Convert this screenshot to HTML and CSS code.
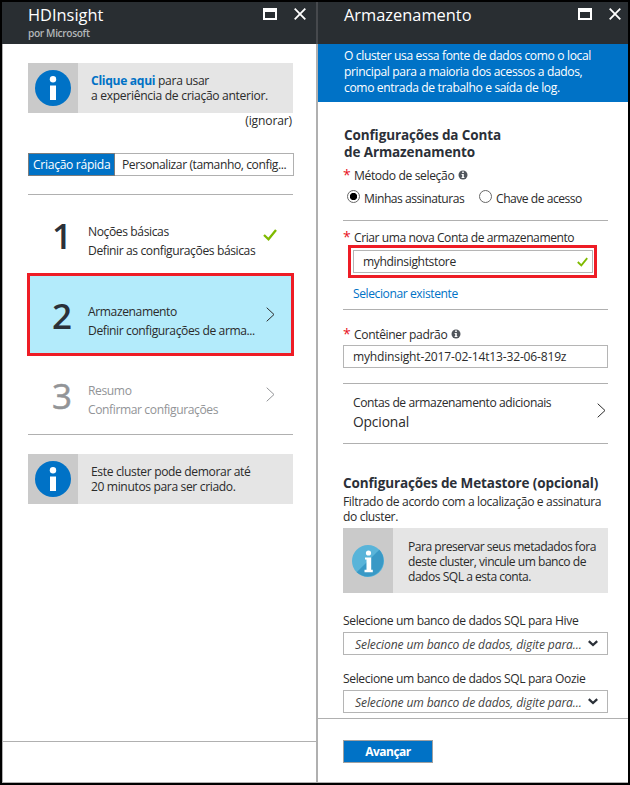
FILE: index.html
```html
<!DOCTYPE html>
<html lang="pt-BR">
<head>
<meta charset="utf-8">
<title>HDInsight</title>
<link rel="stylesheet" href="styles.css">
</head>
<body>
<svg class="defs" width="0" height="0">
  <symbol id="max" viewBox="0 0 14 12"><path fill="#fff" fill-rule="evenodd" d="M0 0h14v12H0zM2 4v6h10V4z"/></symbol>
  <symbol id="close" viewBox="0 0 12 12"><path d="M.7.7l10.6 10.6M11.3.7L.7 11.3" stroke="#fff" stroke-width="1.8" fill="none"/></symbol>
  <symbol id="check" viewBox="0 0 14 12"><path d="M1 6l4.5 4.3L13 1" stroke="#7fba00" stroke-width="2.3" fill="none"/></symbol>
  <symbol id="chevron" viewBox="0 0 9 15"><path d="M.7.7l7.3 6.8-7.3 6.8" stroke="currentColor" stroke-width="1" fill="none"/></symbol>
  <symbol id="caret" viewBox="0 0 10 7"><path d="M.8 1.2L5 5 9.200 1.200" stroke="#2b3038" stroke-width="2.300" fill="none"/></symbol>
  <symbol id="info" viewBox="0 0 36 36"><circle cx="18" cy="18" r="18" fill="#0072c6"/><circle cx="18" cy="9.3" r="3.2" fill="#fff"/><path fill="#fff" d="M15 15.500h6V30h-6z"/></symbol>
  <symbol id="tip" viewBox="0 0 10 10"><circle cx="5" cy="5" r="4.500" fill="#50555c"/><path fill="#fff" d="M4.200 1.600h1.600v1.500H4.200zM3.600 4h2.200v3h.6v1H3.600V7h.6V5h-.6z"/></symbol>
</svg>
<div class="portal">
  <section class="blade blade-left">
    <header>
      <div><h1>HDInsight</h1><p class="by">por Microsoft</p></div>
      <div class="win"><svg width="14" height="12"><use href="#max"/></svg><svg width="12" height="12"><use href="#close"/></svg></div>
    </header>
    <div class="content">
      <div class="notice">
        <div class="mark"><svg width="36" height="36"><use href="#info"/></svg></div>
        <div class="previous"><p><a class="strong">Clique aqui</a> para usar</p><p>a experiência de criação anterior.</p></div>
      </div>
      <div class="skip">(ignorar)</div>
      <div class="tabs"><span class="tab on">Criação rápida</span><span class="tab">Personalizar (tamanho, config...</span></div>
      <div class="steps">
        <div class="step"><b>1</b><div><p>Noções básicas</p><p>Definir as configurações básicas</p></div><svg class="ok" width="14" height="12"><use href="#check"/></svg></div>
        <div class="step active"><b>2</b><div><p>Armazenamento</p><p>Definir configurações de arma...</p></div><svg width="9" height="15"><use href="#chevron"/></svg></div>
        <div class="step off"><b>3</b><div><p>Resumo</p><p>Confirmar configurações</p></div><svg width="9" height="15"><use href="#chevron"/></svg></div>
      </div>
      <div class="notice wait">
        <div class="mark"><svg width="36" height="36"><use href="#info"/></svg></div>
        <div><p>Este cluster pode demorar até</p><p>20 minutos para ser criado.</p></div>
      </div>
    </div>
    <footer></footer>
  </section>
  <section class="blade blade-right">
    <header>
      <h1>Armazenamento</h1>
      <div class="win"><svg width="14" height="12"><use href="#max"/></svg><svg width="12" height="12"><use href="#close"/></svg></div>
    </header>
    <div class="banner"><p>O cluster usa essa fonte de dados como o local</p><p>principal para a maioria dos acessos a dados,</p><p>como entrada de trabalho e saída de log.</p></div>
    <div class="content">
      <h2 class="account">Configurações da Conta<br>de Armazenamento</h2>
      <div class="label method"><i>*</i><span>Método de seleção</span><svg width="10" height="10"><use href="#tip"/></svg></div>
      <div class="radios">
        <span class="radio checked"></span><span class="r1">Minhas assinaturas</span>
        <span class="radio"></span><span>Chave de acesso</span>
      </div>
      <div class="group create">
        <div class="label"><i>*</i><span class="tight">Criar uma nova Conta de armazenamento</span></div>
        <div class="highlight"><div class="field"><span>myhdinsightstore</span><svg width="11" height="10"><use href="#check"/></svg></div></div>
        <a class="existing">Selecionar existente</a>
      </div>
      <div class="group container">
        <div class="label"><i>*</i><span>Contêiner padrão</span><svg width="10" height="10"><use href="#tip"/></svg></div>
        <div class="field"><span>myhdinsight-2017-02-14t13-32-06-819z</span></div>
      </div>
      <div class="group more">
        <div><p>Contas de armazenamento adicionais</p><p class="optional">Opcional</p></div>
        <svg width="9" height="15"><use href="#chevron"/></svg>
      </div>
      <div class="group meta">
        <h2>Configurações de Metastore (opcional)</h2>
        <div class="filter"><p>Filtrado de acordo com a localização e assinatura</p><p>do cluster.</p></div>
        <div class="notice tall">
          <div class="mark"><svg width="32" height="32" viewBox="0 0 32 32"><circle cx="16" cy="16" r="16" fill="#59b4d9"/><path d="M27.3 4.7A16 16 0 0 1 4.7 27.3z" fill="#3999c6"/><circle cx="16.500" cy="8" r="2.600" fill="#fff"/><path fill="#fff" d="M13 12.500h6.200v12.300h1.600v2.400h-8.300v-2.400h2V14.600H13z"/></svg></div>
          <div><p>Para preservar seus metadados fora</p><p>deste cluster, vincule um banco de</p><p>dados SQL a esta conta.</p></div>
        </div>
        <div class="pick"><p>Selecione um banco de dados SQL para Hive</p><div class="field"><em>Selecione um banco de dados, digite para...</em><svg width="10" height="7"><use href="#caret"/></svg></div></div>
        <div class="pick"><p>Selecione um banco de dados SQL para Oozie</p><div class="field"><em>Selecione um banco de dados, digite para...</em><svg width="10" height="7"><use href="#caret"/></svg></div></div>
      </div>
    </div>
    <footer><button>Avançar</button></footer>
  </section>
</div>
</body>
</html>
```
FILE: styles.css
```css
* { box-sizing: border-box; }
body { margin: 0; background: #000; font: 12.1px/15px "Open Sans", "Noto Sans", sans-serif; letter-spacing: -0.37px; color: #2b2b2b; white-space: nowrap; }
h1, h2, p { margin: 0; }
svg { display: block; flex: none; }
.defs { position: absolute; }
a { color: #0072c6; }
.portal { display: grid; grid-template-columns: 316px 310px; width: 626px; height: 781px; margin: 2px; background: #fff; border-bottom: 1px solid #b0b0b0; }
.blade { display: flex; flex-direction: column; height: 780px; }
.blade-left { border-right: 2px solid #b0b0b0; }
header { display: flex; justify-content: space-between; height: 42px; padding: 0 9px 0 26px; background: #292e32; color: #fff; flex: none; }
.blade-left header { margin-right: -2px; border-right: 2px solid #46494d; padding-right: 10px; }
h1 { font-size: 16.4px; line-height: 26px; font-weight: 400; letter-spacing: 0; }
.by { font-size: 10.2px; line-height: 10px; letter-spacing: -0.37px; color: #b3b6b8; font-weight: 600; }
.win { display: flex; gap: 17px; margin-top: 6px; }
.blade-right .win { margin-right: -2px; }
.content { flex: 1; padding: 0 23px 0 26px; }
.blade-left .content { padding: 19px 23px 0 25px; border-left: 1px solid #b0b0b0; }
.notice { display: flex; height: 50px; background: #e5e5e5; }
.mark { display: flex; flex: none; align-items: center; justify-content: center; width: 50px; background: #cacaca; }
.notice > div + div { padding: 10px 0 0 13px; }
.notice > .previous { letter-spacing: -0.31px; }
.strong { font-weight: 700; }
.skip { text-align: right; line-height: 16px; height: 40px; letter-spacing: -0.15px; padding-right: 1px; }
.tabs { display: flex; height: 23px; margin-right: -1px; border: 1px solid #b0b0b0; }
.tab { line-height: 22px; padding-left: 7px; letter-spacing: -0.41px; }
.tab.on { width: 87px; margin: -1px 0 -1px -1px; border: 1px solid #7c7c7c; padding-left: 4px; letter-spacing: -0.3px; background: #0072c6; color: #fff; }
.steps { margin-top: 18px; border: solid #b0b0b0; border-width: 1px 0; }
.step { display: flex; align-items: center; height: 80px; padding: 0 18px 0 24px; }
.step b { flex: none; width: 36px; font-size: 35px; font-weight: 600; letter-spacing: 0; color: #2b3038; }
.step > div { flex: 1; line-height: 19px; padding-top: 11px; letter-spacing: -0.4px; }
.step .ok { margin-right: -2px; }
.active { background: #b3ebfb; border: 3px solid #ee1c25; margin: -2px -1px -2px -1px; height: 83px; padding: 0 16px 0 22px; }
.active > div { padding-top: 13px; }
.active b { padding-top: 2px; }
.off { height: 80px; color: #929497; }
.off > div { padding-top: 12px; }
.off b { color: #929497; font-weight: 400; padding-top: 3px; -webkit-text-stroke: 0.5px #929497; }
.off svg { margin-top: 1px; }
.wait { margin-top: 19px; }
.blade-left footer { height: 41px; border-top: 1px solid #b0b0b0; border-left: 1px solid #b0b0b0; }
.banner { height: 58px; padding: 4px 0 0 26px; line-height: 16px; background: #0072c6; color: #fff; flex: none; }
.blade-right .content { padding: 25px 20px 0 25px; }
h2 { font-size: 13.5px; line-height: 17px; letter-spacing: -0.11px; color: #2b3038; }
.account { padding-left: 1px; }
.label { display: flex; align-items: center; height: 16px; }
.label i { width: 11px; font-style: normal; font-size: 14px; color: #e81123; padding-bottom: 1px; }
.label svg { margin-left: 4px; }
.tight { letter-spacing: -0.44px; }
.method { margin-top: 6px; }
.radios { display: flex; align-items: center; height: 37px; padding: 0 0 7px 4px; letter-spacing: -0.49px; }
.radios .radio { width: 13px; height: 13px; margin: 0 4px 4px 0; border: 1px solid #686868; border-radius: 50%; }
.radio.checked { background: radial-gradient(circle, #000 3.3px, #fff 4px); }
.r1 { width: 115px; }
.group { border-top: 1px solid #b0b0b0; }
.create { height: 89px; padding-top: 8px; }
.highlight { width: 249px; height: 33px; margin-left: 5px; padding: 2px; border: 3px solid #ee1c25; }
.field { display: flex; align-items: center; justify-content: space-between; height: 23px; border: 1px solid #b5b5b5; padding: 0 9px; background: #fff; }
.highlight .field { width: 240px; padding: 0 4px 0 9px; }
.existing { display: block; margin: 8px 0 0 10px; letter-spacing: -0.42px; }
.container { height: 74px; padding-top: 16px; }
.container .field { margin-top: 3px; letter-spacing: -0.2px; }
.more { display: flex; align-items: center; justify-content: space-between; height: 60px; padding: 0 2px 0 10px; letter-spacing: -0.41px; }
.more div { line-height: 19px; margin-top: -4px; }
.more svg { margin-top: -6px; }
.optional { font-size: 13.8px; letter-spacing: -0.15px; }
.meta { padding-top: 31px; }
.filter { padding-top: 2px; }
.tall { height: 65px; margin-top: 4px; letter-spacing: -0.5px; }
.notice.tall > div + div { padding: 11px 0 0 15px; }
.pick { padding-top: 20px; height: 62px; }
.pick + .pick { height: 58px; padding-top: 16px; }
.pick p { line-height: 16px; margin-bottom: 3px; }
.pick em { padding-left: 2px; padding-top: 1px; letter-spacing: -0.12px; color: #444; }
.blade-right footer { height: 64px; padding: 21px 25px; border-top: 1px solid #b0b0b0; flex: none; }
button { display: block; width: 90px; height: 23px; padding: 0; border: 1px solid #a0a0a0; background: #0072c6; color: #fff; font: 700 12px/20px "Open Sans", sans-serif; letter-spacing: -0.5px; }
```
